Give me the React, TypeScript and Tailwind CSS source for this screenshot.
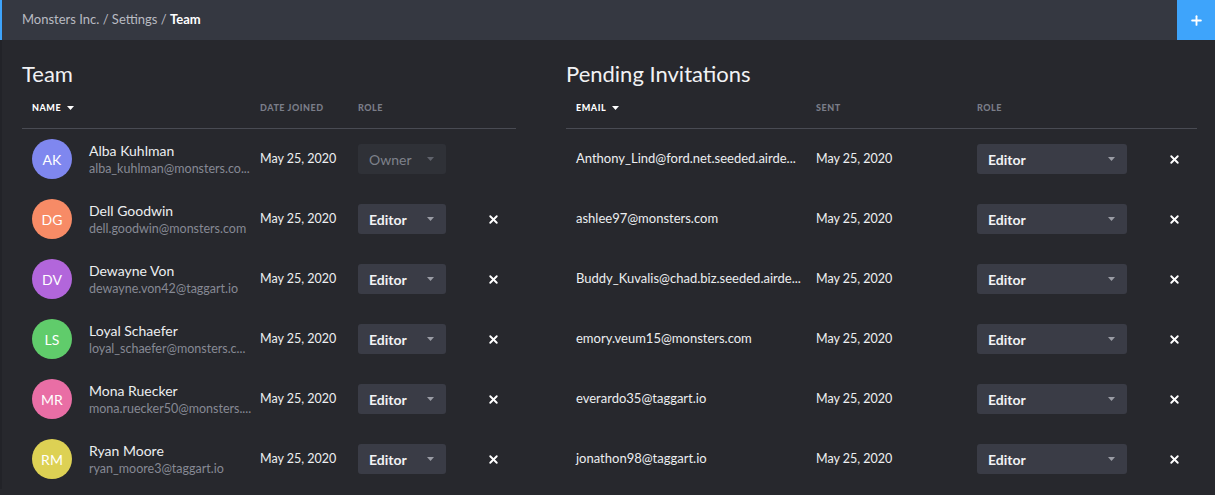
import { Plus, X } from 'lucide-react'

const FONT = { fontFamily: 'Lato, "Open Sans", sans-serif' }

const MEMBERS = [
  { initials: 'AK', name: 'Alba Kuhlman', email: 'alba_kuhlman@monsters.co...', color: 'bg-[#7f87ef]', role: 'Owner' },
  { initials: 'DG', name: 'Dell Goodwin', email: 'dell.goodwin@monsters.com', color: 'bg-[#f78b66]', role: 'Editor' },
  { initials: 'DV', name: 'Dewayne Von', email: 'dewayne.von42@taggart.io', color: 'bg-[#b266db]', role: 'Editor' },
  { initials: 'LS', name: 'Loyal Schaefer', email: 'loyal_schaefer@monsters.c...', color: 'bg-[#60cc6b]', role: 'Editor' },
  { initials: 'MR', name: 'Mona Ruecker', email: 'mona.ruecker50@monsters....', color: 'bg-[#e96ea5]', role: 'Editor' },
  { initials: 'RM', name: 'Ryan Moore', email: 'ryan_moore3@taggart.io', color: 'bg-[#ddd154]', role: 'Editor' },
]

const INVITES = [
  'Anthony_Lind@ford.net.seeded.airde...',
  'ashlee97@monsters.com',
  'Buddy_Kuvalis@chad.biz.seeded.airde...',
  'emory.veum15@monsters.com',
  'everardo35@taggart.io',
  'jonathon98@taggart.io',
]

function Caret({ className }: { className: string }) {
  return (
    <svg width="7" height="4" viewBox="0 0 7 4" className={className}>
      <path d="M0 0h7L3.5 4z" fill="currentColor" />
    </svg>
  )
}

function RoleSelect({ role, width }: { role: string; width: string }) {
  const disabled = role === 'Owner'
  return (
    <div
      className={`flex h-[30px] items-center justify-between rounded-[3px] pl-[11px] pr-[12px] text-[14px] ${width} ${
        disabled ? 'bg-[#2f3137] text-[#7e818b]' : 'bg-[#3a3c46] font-bold text-[#f2f2f4]'
      }`}
    >
      <span>{role}</span>
      <Caret className={disabled ? 'text-[#5f626b]' : 'text-[#9a9ca5]'} />
    </div>
  )
}

function HeaderLabel({ label, active }: { label: string; active?: boolean }) {
  return (
    <div
      className={`flex items-center gap-[6px] pl-[10px] text-[9px] font-black tracking-[0.06em] ${
        active ? 'text-white' : 'text-[#7a7d88]'
      }`}
    >
      {label}
      {active && <Caret className="text-white" />}
    </div>
  )
}

export default function App() {
  return (
    <div className="h-[495px] w-[1215px] overflow-hidden bg-[#27282d] text-[#e8e9ec]" style={FONT}>
      {/* Top bar */}
      <div className="flex h-[40px] items-center border-l-2 border-[#3ea4fb] bg-[#353841]">
        <div className="flex-1 pl-[20px] text-[13px] text-[#b9bbc2]">
          Monsters Inc. / Settings / <span className="font-bold text-white">Team</span>
        </div>
        <button className="flex h-[40px] w-[38px] items-center justify-center bg-[#3ea4fb] text-white">
          <Plus size={15} strokeWidth={3} />
        </button>
      </div>

      <div className="flex gap-[50px] border-l-2 border-[#222328] pl-[20px] pr-[18px] pt-[20px]">
        {/* Team */}
        <section className="w-[494px]">
          <h2 className="h-[28px] text-[22px] leading-[28px] text-[#f1f2f4]">Team</h2>
          <div className="grid h-[41px] grid-cols-[228px_98px_124px_44px] items-center border-b border-[#494b53]">
            <HeaderLabel label="NAME" active />
            <HeaderLabel label="DATE JOINED" />
            <HeaderLabel label="ROLE" />
            <div />
          </div>
          {MEMBERS.map(m => (
            <div key={m.initials} className="grid h-[60px] grid-cols-[228px_98px_124px_44px] items-center">
              <div className="flex min-w-0 items-center gap-[17px] pl-[10px]">
                <div
                  className={`flex h-10 w-10 shrink-0 items-center justify-center rounded-full text-[14px] text-white ${m.color}`}
                >
                  {m.initials}
                </div>
                <div className="min-w-0 pt-[1px]">
                  <div className="text-[14px] leading-[18px] text-[#eceef0]">{m.name}</div>
                  <div className="whitespace-nowrap text-[12.5px] leading-[18px] text-[#868994]">{m.email}</div>
                </div>
              </div>
              <div className="pl-[10px] text-[12.5px] text-[#eef0f2]">May 25, 2020</div>
              <div className="pl-[10px]">
                <RoleSelect role={m.role} width="w-[88px]" />
              </div>
              <div className="pl-[15px]">
                {m.role !== 'Owner' && <X size={13} strokeWidth={3.5} className="text-white" />}
              </div>
            </div>
          ))}
        </section>

        {/* Pending invitations */}
        <section className="flex-1">
          <h2 className="h-[28px] text-[22px] leading-[28px] text-[#f1f2f4]">Pending Invitations</h2>
          <div className="grid h-[41px] grid-cols-[240px_161px_183px_47px] items-center border-b border-[#494b53]">
            <HeaderLabel label="EMAIL" active />
            <HeaderLabel label="SENT" />
            <HeaderLabel label="ROLE" />
            <div />
          </div>
          {INVITES.map(email => (
            <div key={email} className="grid h-[60px] grid-cols-[240px_161px_183px_47px] items-center">
              <div className="whitespace-nowrap pl-[10px] text-[13px] text-[#eceef0]">{email}</div>
              <div className="pl-[10px] text-[12.5px] text-[#eef0f2]">May 25, 2020</div>
              <div className="pl-[10px]">
                <RoleSelect role="Editor" width="w-[150px]" />
              </div>
              <div className="pl-[18px]">
                <X size={13} strokeWidth={3.5} className="text-white" />
              </div>
            </div>
          ))}
        </section>
      </div>
    </div>
  )
}
